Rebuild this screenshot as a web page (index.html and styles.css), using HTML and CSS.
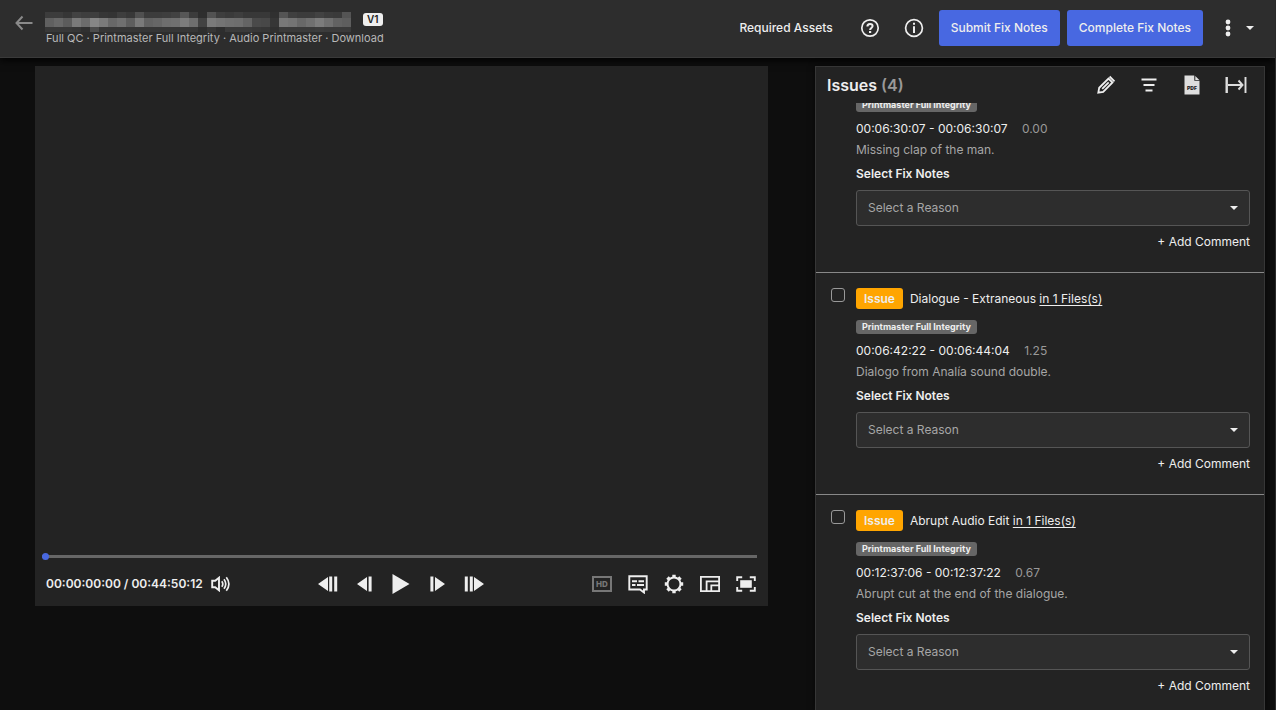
FILE: index.html
```
<!DOCTYPE html>
<html lang="en">
<head>
    <meta charset="UTF-8">
    <meta name="viewport" content="width=device-width, initial-scale=1.0">
    <title>Fix Notes</title>
    <link rel="stylesheet" href="styles.css">
</head>
<body>
    <header class="topbar">
        <button class="icon-button back" aria-label="Back">
            <svg width="18" height="16" viewBox="0 0 18 16"><path d="M17.500 8H1.800M7.500 1.500L1.500 8l6 6.500" fill="none" stroke="#8a8a8a" stroke-width="2"/></svg>
        </button>
        <div class="title-block">
            <div class="title-row">
                <svg class="redacted" id="redacted" width="309" height="20" viewBox="0 0 309 20" shape-rendering="crispEdges"></svg>
                <span class="version">V1</span>
            </div>
            <div class="subtitle">Full QC · Printmaster Full Integrity · Audio Printmaster · Download</div>
        </div>
        <nav class="actions">
            <button class="text-button">Required Assets</button>
            <button class="icon-button help" aria-label="Help">
                <svg width="20" height="20" viewBox="0 0 20 20" fill="none" stroke="#eee"><circle cx="10" cy="10" r="8.200" stroke-width="1.700"/><path d="M7.400 8.400C7.400 6.700 8.500 5.900 10 5.900s2.600 0.900 2.600 2.200c0 1.800-2.500 1.900-2.500 3.800" stroke-width="2"/><path d="M9 13h2.200v2H9z" fill="#eee" stroke="none"/></svg>
            </button>
            <button class="icon-button info" aria-label="Information">
                <svg width="20" height="20" viewBox="0 0 20 20"><circle cx="10" cy="10" r="8.400" fill="none" stroke="#eee" stroke-width="1.700"/><path d="M9 4.800h2v2H9zM9 8.200h2V15H9z" fill="#eee"/></svg>
            </button>
            <button class="primary-button">Submit Fix Notes</button>
            <button class="primary-button">Complete Fix Notes</button>
            <button class="icon-button more" aria-label="More options">
                <svg width="6" height="18" viewBox="0 0 6 18" fill="#eee"><circle cx="3" cy="3" r="2.400"/><circle cx="3" cy="9" r="2.400"/><circle cx="3" cy="15" r="2.400"/></svg>
            </button>
            <button class="icon-button" aria-label="Open menu">
                <svg width="8" height="4" viewBox="0 0 8 4"><path d="M0 0h8L4 4z" fill="#eee"/></svg>
            </button>
        </nav>
    </header>

    <main class="content">
        <section class="player">
            <div class="video"></div>
            <div class="progress">
                <input class="seek" type="range" min="0" max="100" value="0" aria-label="Seek">
            </div>
            <div class="controls">
                <div class="controls-left">
                    <span class="timecode">00:00:00:00 / 00:44:50:12</span>
                    <button class="icon-button" aria-label="Volume">
                        <svg width="20" height="16" viewBox="0 0 20 16" fill="none" stroke="#eee"><path d="M1.200 4.700h3l3.800-3v12.600l-3.800-3h-3z" stroke-width="1.900"/><path d="M10.800 5.200c1.300 1.800 1.300 3.800 0 5.600M13 3.200c2.200 3 2.200 6.600 0 9.600M15.300 1.200c3.200 4.200 3.200 9.400 0 13.600" stroke-width="1.700"/></svg>
                    </button>
                </div>
                <div class="controls-center">
                    <button class="icon-button" aria-label="Back ten frames">
                        <svg width="20" height="16" viewBox="0 0 20 16" fill="#eee"><path d="M0 8l10-7v14zM11.200 0.500h3v15h-3zM16.200 0.500h3v15h-3z"/></svg>
                    </button>
                    <button class="icon-button" aria-label="Back one frame">
                        <svg width="16" height="16" viewBox="0 0 16 16" fill="#eee"><path d="M0 8l10-7v14zM11.600 0.500h3v15h-3z"/></svg>
                    </button>
                    <button class="icon-button" aria-label="Play">
                        <svg width="18" height="20" viewBox="0 0 18 20" fill="#eee"><path d="M0.500 0l17 10-17 10z"/></svg>
                    </button>
                    <button class="icon-button" aria-label="Forward one frame">
                        <svg width="16" height="16" viewBox="0 0 16 16" fill="#eee"><path d="M16 8L6 1v14zM1.400 0.500h3v15h-3z"/></svg>
                    </button>
                    <button class="icon-button" aria-label="Forward ten frames">
                        <svg width="20" height="16" viewBox="0 0 20 16" fill="#eee"><path d="M20 8L10 1v14zM5.800 0.500h3v15h-3zM0.800 0.500h3v15h-3z"/></svg>
                    </button>
                </div>
                <div class="controls-right">
                    <button class="hd" disabled>HD</button>
                    <button class="icon-button" aria-label="Subtitles">
                        <svg width="20" height="20" viewBox="0 0 20 20"><path d="M1.300 2.300h17.400v13.200H16v3l-4-3H1.300z" fill="none" stroke="#eee" stroke-width="1.900"/><path d="M4 7.300h5M10.500 7.300H16M4 11h3.500M9 11h7" stroke="#eee" stroke-width="1.900"/></svg>
                    </button>
                    <button class="icon-button" aria-label="Settings">
                        <svg width="20" height="20" viewBox="0 0 20 20" fill="none" stroke="#eee"><circle cx="10" cy="10" r="6.500" stroke-width="2"/><path d="M10 0.800v2.500M10 16.700v2.500M0.800 10h2.500M16.700 10h2.500M3.500 3.500l1.800 1.800M14.700 14.700l1.800 1.800M3.500 16.500l1.800-1.800M14.700 5.300l1.800-1.800" stroke-width="3.400"/></svg>
                    </button>
                    <button class="icon-button" aria-label="Picture in picture">
                        <svg width="20" height="16" viewBox="0 0 20 16" fill="none" stroke="#eee" stroke-width="1.800"><path d="M0.900 0.900h18.200v14.200H0.900zM6.600 15V5.300H19M11.300 15V9.300H19"/></svg>
                    </button>
                    <button class="icon-button" aria-label="Fullscreen">
                        <svg width="20" height="16" viewBox="0 0 20 16"><path d="M1.200 5V1.200h5M13.800 1.200h5V5M18.800 11v3.800h-5M6.200 14.800h-5V11" fill="none" stroke="#eee" stroke-width="1.900"/><path d="M4.200 4.200h11.600v7.600H4.200z" fill="#eee"/></svg>
                    </button>
                </div>
            </div>
        </section>

        <aside class="issues">
            <div class="issues-header">
                <h2 class="issues-title">Issues <span class="count">(4)</span></h2>
                <div class="issues-tools">
                    <button class="icon-button" aria-label="Edit">
                        <svg width="20" height="20" viewBox="0 0 20 20" fill="none" stroke="#eee" stroke-width="1.800"><path d="M2.300 17.700l0.900-4.900L12.500 3.500l4 4L7.200 16.800zM13.600 1.500l4.900 4.900M6.200 13.800l6.500-6.500"/></svg>
                    </button>
                    <button class="icon-button" aria-label="Filter">
                        <svg width="20" height="20" viewBox="0 0 20 20" stroke="#eee" stroke-width="2"><path d="M2.500 4.500h15M4.500 10h11M6.500 15.500h7"/></svg>
                    </button>
                    <button class="icon-button" aria-label="Export PDF">
                        <svg width="20" height="20" viewBox="0 0 20 20"><path d="M2.500 0.500h9.800v5.200h5.200v13.800h-15zM13.300 1l4 4h-4z" fill="#dedede"/><text class="pdf-label" x="10" y="15" text-anchor="middle">PDF</text></svg>
                    </button>
                    <button class="icon-button" aria-label="Collapse panel">
                        <svg width="22" height="20" viewBox="0 0 22 20" fill="none" stroke="#dedede"><path d="M1.700 2v16" stroke-width="2.400"/><path d="M20.500 2v16M3 10h14M13.500 5.500L17.500 10l-4 4.500" stroke-width="1.900"/></svg>
                    </button>
                </div>
            </div>

            <div class="issues-list" id="issuesList">
                <article class="issue">
                    <div class="issue-body">
                        <span class="tag">Printmaster Full Integrity</span>
                        <div class="range">00:06:30:07 - 00:06:30:07 <span class="duration">0.00</span></div>
                        <p class="description">Missing clap of the man.</p>
                        <label class="fix-label" for="reason1">Select Fix Notes</label>
                        <select class="reason" id="reason1"><option>Select a Reason</option></select>
                        <button class="add-comment">+ Add Comment</button>
                    </div>
                </article>

                <article class="issue">
                    <input class="issue-check" type="checkbox" aria-label="Select issue">
                    <div class="issue-body">
                        <div class="issue-title">
                            <span class="badge">Issue</span>
                            <span>Dialogue - Extraneous <a class="files" href="#">in 1 Files(s)</a></span>
                        </div>
                        <span class="tag">Printmaster Full Integrity</span>
                        <div class="range">00:06:42:22 - 00:06:44:04 <span class="duration">1.25</span></div>
                        <p class="description">Dialogo from Analía sound double.</p>
                        <label class="fix-label" for="reason2">Select Fix Notes</label>
                        <select class="reason" id="reason2"><option>Select a Reason</option></select>
                        <button class="add-comment">+ Add Comment</button>
                    </div>
                </article>

                <article class="issue">
                    <input class="issue-check" type="checkbox" aria-label="Select issue">
                    <div class="issue-body">
                        <div class="issue-title">
                            <span class="badge">Issue</span>
                            <span>Abrupt Audio Edit <a class="files" href="#">in 1 Files(s)</a></span>
                        </div>
                        <span class="tag">Printmaster Full Integrity</span>
                        <div class="range">00:12:37:06 - 00:12:37:22 <span class="duration">0.67</span></div>
                        <p class="description">Abrupt cut at the end of the dialogue.</p>
                        <label class="fix-label" for="reason3">Select Fix Notes</label>
                        <select class="reason" id="reason3"><option>Select a Reason</option></select>
                        <button class="add-comment">+ Add Comment</button>
                    </div>
                </article>
            </div>
        </aside>
    </main>

    <script src="script.js"></script>
</body>
</html>
```
FILE: styles.css
```
* {
    box-sizing: border-box;
}

body {
    margin: 0;
    height: 100vh;
    display: flex;
    flex-direction: column;
    overflow: hidden;
    border-right: 1px solid #2a2a2a;
    background-color: #0e0e0e;
    color: #eee;
    font-family: Inter, "Liberation Sans", sans-serif;
    font-size: 12px;
    line-height: 20px;
}

button {
    margin: 0;
    padding: 0;
    border: none;
    background: none;
    color: inherit;
    font: inherit;
    cursor: pointer;
}

.icon-button {
    display: flex;
    align-items: center;
    justify-content: center;
}

/* Top bar */
.topbar {
    display: flex;
    align-items: flex-start;
    flex-shrink: 0;
    height: 58px;
    padding: 10px 21px 0 15px;
    background-color: #2d2d2d;
    border-bottom: 1px solid #3a3a3a;
    box-shadow: 0 2px 8px #000;
}

.back {
    margin: 5px 12px 0 0;
}

.title-row {
    display: flex;
    align-items: flex-start;
    gap: 9px;
    height: 20px;
    margin-top: 2px;
}

.redacted {
    display: block;
}

.version {
    margin-top: 1px;
    padding: 0 4px;
    border-radius: 3px;
    background-color: #eee;
    color: #222;
    font-size: 10px;
    font-weight: 600;
    line-height: 13px;
}

.subtitle {
    padding-left: 1px;
    color: #b8b8b8;
    font-size: 11px;
    line-height: 13px;
}

.actions {
    display: flex;
    align-items: center;
    margin-left: auto;
}

.text-button {
    font-weight: 500;
}

.help {
    margin: 0 24px 0 27px;
}

.info {
    margin-right: 15px;
}

.primary-button {
    height: 36px;
    margin-right: 7px;
    padding: 0 12px;
    border-radius: 3px;
    background-color: #4868e1;
    font-weight: 500;
}

.more {
    margin: 0 15px;
}

/* Main area */
.content {
    display: flex;
    align-items: flex-start;
    flex: 1;
    min-height: 0;
    gap: 47px;
    padding: 8px 10px 0 35px;
}

.player {
    flex: 1;
    background-color: #232323;
}

.video {
    aspect-ratio: 3 / 2;
}

.progress {
    display: flex;
    padding: 0 11px 0 7px;
}

.seek {
    appearance: none;
    width: 100%;
    height: 3px;
    margin: 0;
    background-color: #666;
}

.seek::-webkit-slider-thumb {
    appearance: none;
    width: 7px;
    height: 7px;
    border-radius: 50%;
    background-color: #4868e1;
}

.controls {
    display: grid;
    grid-template-columns: 1fr auto 1fr;
    align-items: center;
    height: 44px;
    margin-top: 4px;
    padding: 0 12px 0 11px;
}

.controls-left,
.controls-center,
.controls-right {
    display: flex;
    align-items: center;
}

.controls-left {
    gap: 8px;
}

.timecode {
    font-weight: 600;
}

.controls-center {
    gap: 19px;
}

.controls-right {
    justify-content: flex-end;
    gap: 16px;
}

.hd {
    width: 20px;
    height: 16px;
    border: 2px solid #777;
    color: #777;
    font-size: 8px;
    font-weight: 800;
    line-height: 12px;
}

/* Issues panel */
.issues {
    display: flex;
    flex-direction: column;
    width: 450px;
    height: 100%;
    border: 1px solid #363636;
    border-bottom: none;
    background-color: #232323;
    box-shadow: 0 0 6px rgba(0, 0, 0, 0.5);
}

.issues-header {
    display: flex;
    align-items: center;
    justify-content: space-between;
    flex-shrink: 0;
    height: 36px;
    padding: 0 17px 0 11px;
}

.issues-title {
    margin: 0;
    font-size: 16px;
    font-weight: 600;
}

.count {
    color: #999;
}

.issues-tools {
    display: flex;
    gap: 23px;
}

.pdf-label {
    fill: #222;
    font-size: 5px;
    font-weight: 900;
}

.issues-list {
    flex: 1;
    overflow: auto;
    scrollbar-width: none;
}

.issue {
    display: flex;
    gap: 11px;
    padding: 15px 14px 20px 15px;
    border-bottom: 1px solid #888;
}

.issue-check {
    appearance: none;
    flex-shrink: 0;
    width: 14px;
    height: 14px;
    margin: 0;
    border: 1px solid #999;
    border-radius: 3px;
}

.issue-body {
    display: flex;
    flex-direction: column;
    align-items: flex-start;
    flex: 1;
}

.issue-body:first-child {
    padding-left: 25px;
}

.issue-title {
    display: flex;
    align-items: center;
    gap: 7px;
    margin-bottom: 11px;
}

.badge {
    padding: 0 8px;
    border-radius: 3px;
    background-color: #ffa500;
    font-weight: 600;
    line-height: 21px;
}

.files {
    color: inherit;
    text-underline-offset: 2px;
}

.tag {
    margin-bottom: 6px;
    padding: 0 6px;
    border-radius: 3px;
    background-color: #666;
    font-size: 9px;
    font-weight: 700;
    line-height: 14px;
}

.range,
.description {
    margin: 0;
    line-height: 21px;
}

.duration {
    margin-left: 11px;
    color: #999;
}

.description {
    color: #a6a6a6;
}

.fix-label {
    margin: 4px 0 6px;
    font-weight: 600;
}

.reason {
    appearance: none;
    width: 100%;
    height: 36px;
    padding: 0 11px;
    border: 1px solid #555;
    border-radius: 3px;
    background: #2d2d2d url("data:image/svg+xml,%3Csvg xmlns='http://www.w3.org/2000/svg' width='8' height='4'%3E%3Cpath d='M0 0h8L4 4z' fill='%23eee'/%3E%3C/svg%3E") no-repeat right 11px center;
    color: #a6a6a6;
    font: inherit;
}

.add-comment {
    margin-top: 6px;
    align-self: flex-end;
}
```
FILE: script.js
```
// Grey levels of the masked title, one value per 9px block
const rows = [
    { y: 0, h: 6, levels: [60, 60, 54, 66, 62, 62, 54, 52, 62, 56, 80, 60, 60, 62, 66, 86, 60, 46, 82, 62, 58, 62, 56, 56, 56, 48, 84, 64, 60, 60, 66, 60, 58, 84] },
    { y: 6, h: 9, levels: [96, 104, 92, 122, 108, 134, 122, 104, 112, 94, 122, 98, 102, 110, 112, 124, 110, 66, 122, 116, 112, 110, 100, 74, 72, 54, 120, 116, 104, 112, 124, 112, 98, 94] },
    { y: 15, h: 5, levels: [56, 56, 56, 54, 48, 76, 54, 54, 54, 54, 54, 54, 54, 54, 54, 54, 54, 46, 54, 46, 58, 58, 58, 56, 54, 48, 58, 58, 58, 58, 60, 58, 58, 58] }
];

const redacted = document.getElementById('redacted');

rows.forEach(row => {
    row.levels.forEach((level, i) => {
        const rect = document.createElementNS('http://www.w3.org/2000/svg', 'rect');
        rect.setAttribute('x', i * 9);
        rect.setAttribute('y', row.y);
        rect.setAttribute('width', 9);
        rect.setAttribute('height', row.h);
        rect.setAttribute('fill', `rgb(${level}, ${level}, ${level})`);
        redacted.appendChild(rect);
    });
});

document.getElementById('issuesList').scrollTop = 20;
```
